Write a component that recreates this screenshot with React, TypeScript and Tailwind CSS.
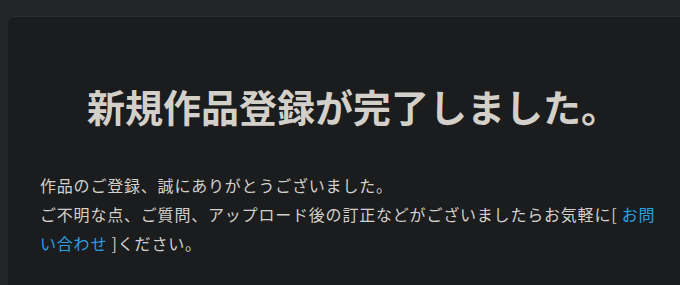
import React from "react";

export default function App() {
  return (
    <div
      className="h-[285px] w-full overflow-hidden bg-[#222628] pt-4 pl-2"
      style={{ fontFamily: '"Noto Sans CJK JP", "Noto Sans", sans-serif' }}
    >
      <div className="h-[300px] w-[680px] rounded-md border-t border-[#2a2d2f] bg-[#1b1c1e] px-8 pt-[59px]">
        <h1 className="pl-[10px] text-center text-[38px] font-bold leading-[59px] text-[#d3d0ca]">
          新規作品登録が完了しました。
        </h1>
        <div className="mt-[36px] text-[16px] leading-[29px] tracking-[0.8px] text-[#d3d0ca]">
          <p>作品のご登録、誠にありがとうございました。</p>
          <p>
            ご不明な点、ご質問、アップロード後の訂正などがございましたらお気軽に[{" "}
            <a href="#" className="text-[#2c9fe0]">
              お問い合わせ
            </a>{" "}
            ]ください。
          </p>
        </div>
      </div>
    </div>
  );
}
